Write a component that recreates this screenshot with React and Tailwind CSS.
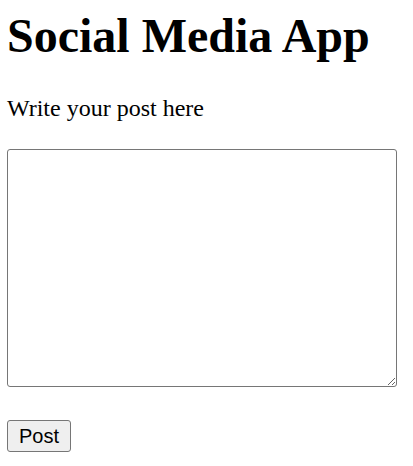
export default function App() {
  return (
    <div className="bg-white px-[7px] font-['Liberation_Serif','Times_New_Roman',serif] text-black">
      <h1 className="pt-[8px] text-[48px] font-bold leading-[55px]">Social Media App</h1>
      <p className="mt-[31px] text-[24px] leading-[28px]">Write your post here</p>
      <textarea className="mt-[27px] block h-[238px] w-[390px] resize-y rounded-[3px] border border-[#767676] bg-white p-[2px] font-['Liberation_Mono',monospace] text-[20px]" />
      <button className="mt-[33px] h-[32px] w-[64px] rounded-[3px] border border-[#767676] bg-[#efefef] font-['Liberation_Sans',Arial,sans-serif] text-[20px] leading-[24px] text-black">
        Post
      </button>
    </div>
  );
}
